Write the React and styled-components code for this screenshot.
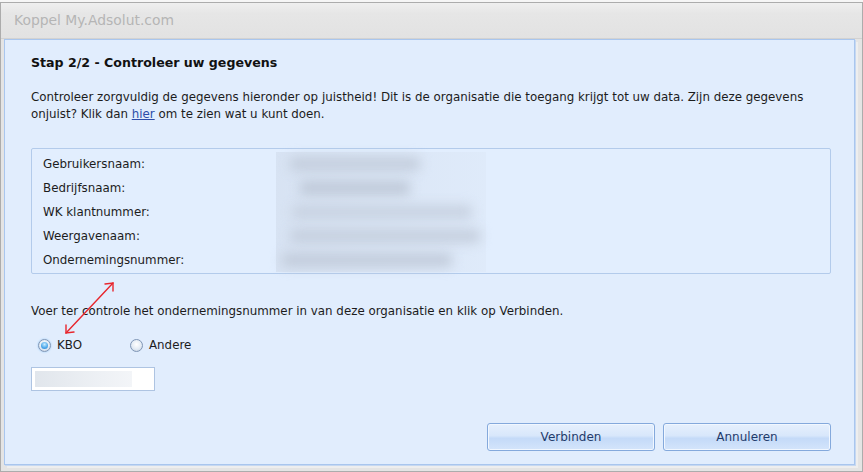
import React from 'react';
import styled, {createGlobalStyle} from 'styled-components';

const GlobalStyle = createGlobalStyle`
    html, body {
        margin: 0;
        padding: 0;
        background: #f6f6f6;
    }
    body {
        font-family: "DejaVu Sans", Verdana, sans-serif;
        font-size: 11.85px;
        color: #1c1c1c;
    }
`;

const Window = styled.div`
    box-sizing: border-box;
    width: 863px;
    height: 470px;
    margin-top: 2px;
    border: 1px solid #acacac;
    background: #e4e4e4;
    display: flex;
    flex-direction: column;
`;

const TitleBar = styled.div`
    height: 35px;
    flex: none;
    display: flex;
    align-items: center;
    padding-left: 13px;
    padding-bottom: 1px;
    box-sizing: border-box;
    background: linear-gradient(#efefef 0%, #e6e6e6 30%, #e2e2e2 100%);
    color: #b5b5b5;
    font-size: 13.9px;
`;

const Frame = styled.div`
    flex: 1;
    display: flex;
    padding: 0 7px 6px 3px;
    border-top: 1px solid #d2d2d2;
`;

const Panel = styled.div`
    position: relative;
    flex: 1;
    display: flex;
    flex-direction: column;
    padding: 15px 23px 13px 26px;
    background: #e1edfd;
    border: 1px solid #a9c6ee;
    box-shadow: 1px 1px 0 #c6d8f1, 3px 3px 0 #eeeeee;
`;

const Heading = styled.h3`
    margin: 0;
    font-size: 12.6px;
    line-height: 16px;
    font-weight: bold;
    color: #111;
`;

const Text = styled.p`
    margin: ${p => p.$top || 0}px 0 0;
    line-height: 17px;
`;

const Link = styled.a`
    color: #2c4da8;
    text-decoration: underline;
`;

const InfoBox = styled.div`
    margin-top: 25px;
    padding: 3px 0 1px 11px;
    border: 1px solid #b3cbeb;
    border-radius: 2px;
    background: #e2eefe;
`;

const InfoRow = styled.div`
    display: grid;
    grid-template-columns: 233px 1fr;
    align-items: center;
    height: 24px;
`;

const ValueCell = styled.div`
    height: 24px;
    width: 210px;
    display: flex;
    align-items: center;
    background: linear-gradient(90deg, rgba(196, 206, 222, 0.35), rgba(214, 224, 238, 0.25));
`;

const Blurred = styled.div`
    height: ${p => p.$h || 14}px;
    width: ${p => p.$w}px;
    margin-left: ${p => p.$ml || 0}px;
    background: ${p => p.$c || '#c3cede'};
    filter: blur(6px);
    border-radius: 4px;
`;

const Radios = styled.div`
    display: flex;
    align-items: center;
    margin-top: 17px;
    padding-left: 7px;
    height: 16px;
`;

const RadioLabel = styled.label`
    display: flex;
    align-items: center;
    gap: 6px;
    margin-right: ${p => p.$mr || 0}px;
`;

const RadioDot = styled.span`
    box-sizing: border-box;
    width: 13px;
    height: 13px;
    border-radius: 50%;
    border: 1px solid #7f96b6;
    background: radial-gradient(circle at 50% 40%, #ffffff 0%, #e3ebf4 55%, #bccadb 100%);
    display: flex;
    align-items: center;
    justify-content: center;
    box-shadow: 0 0 2px ${p => (p.$checked ? '#8fc6f7' : 'transparent')};
    &::after {
        content: '';
        width: 7px;
        height: 7px;
        border-radius: 50%;
        display: ${p => (p.$checked ? 'block' : 'none')};
        background: radial-gradient(circle at 50% 35%, #c7ecff 0%, #4aa6ea 60%, #2b7fcf 100%);
    }
`;

const Input = styled.div`
    box-sizing: border-box;
    width: 124px;
    height: 24px;
    margin-top: 14px;
    padding: 3px 22px 3px 3px;
    border: 1px solid #aec4e2;
    background: #fff;
    display: flex;
`;

const InputFill = styled.div`
    flex: 1;
    background: linear-gradient(90deg, #e1e6ec 0%, #eef1f5 70%, #f3f5f8 100%);
`;

const ButtonBar = styled.div`
    margin-top: auto;
    display: flex;
    justify-content: flex-end;
    gap: 8px;
`;

const Button = styled.button`
    width: 168px;
    height: 28px;
    border: 1px solid #84a9dc;
    border-radius: 3px;
    background: linear-gradient(#e6f0fd 0%, #d8e7fb 45%, #c4daf8 55%, #d4e5fb 100%);
    box-shadow: inset 0 0 0 1px #f1f7ff;
    color: #1f3b6b;
    font-family: "DejaVu Sans", Verdana, sans-serif;
    font-size: 12px;
    padding: 0;
`;

const Arrow = styled.svg`
    position: absolute;
    left: 52px;
    top: 236px;
    overflow: visible;
`;

const rows = [
    {label: 'Gebruikersnaam:', w: 130, ml: 14, c: '#c4cedd'},
    {label: 'Bedrijfsnaam:', w: 110, ml: 24, c: '#bfc9d8'},
    {label: 'WK klantnummer:', w: 180, ml: 16, c: '#c8d2e1'},
    {label: 'Weergavenaam:', w: 190, ml: 14, c: '#c5cfde'},
    {label: 'Ondernemingsnummer:', w: 170, ml: 6, c: '#c2ccdb'},
];

const App = () => {
    return (
        <>
            <GlobalStyle/>
            <Window>
                <TitleBar>Koppel My.Adsolut.com</TitleBar>
                <Frame>
                    <Panel>
                        <Heading>Stap 2/2 - Controleer uw gegevens</Heading>
                        <Text $top={18}>
                            Controleer zorgvuldig de gegevens hieronder op juistheid! Dit is de organisatie die toegang krijgt tot uw data. Zijn deze gegevens onjuist? Klik dan <Link href="#">hier</Link> om te zien wat u kunt doen.
                        </Text>
                        <InfoBox>
                            {rows.map(r => (
                                <InfoRow key={r.label}>
                                    <span>{r.label}</span>
                                    <ValueCell>
                                        <Blurred $w={r.w} $ml={r.ml} $c={r.c}/>
                                    </ValueCell>
                                </InfoRow>
                            ))}
                        </InfoBox>
                        <Text $top={29}>
                            Voer ter controle het ondernemingsnummer in van deze organisatie en klik op Verbinden.
                        </Text>
                        <Radios>
                            <RadioLabel $mr={48}>
                                <RadioDot $checked/>
                                KBO
                            </RadioLabel>
                            <RadioLabel>
                                <RadioDot/>
                                Andere
                            </RadioLabel>
                        </Radios>
                        <Input>
                            <InputFill/>
                        </Input>
                        <ButtonBar>
                            <Button>Verbinden</Button>
                            <Button>Annuleren</Button>
                        </ButtonBar>
                        <Arrow width="60" height="60" viewBox="0 0 60 60">
                            <g stroke="#e8262d" strokeWidth="1.4" fill="none" strokeLinecap="round">
                                <line x1="9" y1="57" x2="56" y2="7"/>
                                <polyline points="9,49 9,57 17,56"/>
                                <polyline points="48,8 56,7 56,15"/>
                            </g>
                        </Arrow>
                    </Panel>
                </Frame>
            </Window>
        </>
    );
};

export default App;
